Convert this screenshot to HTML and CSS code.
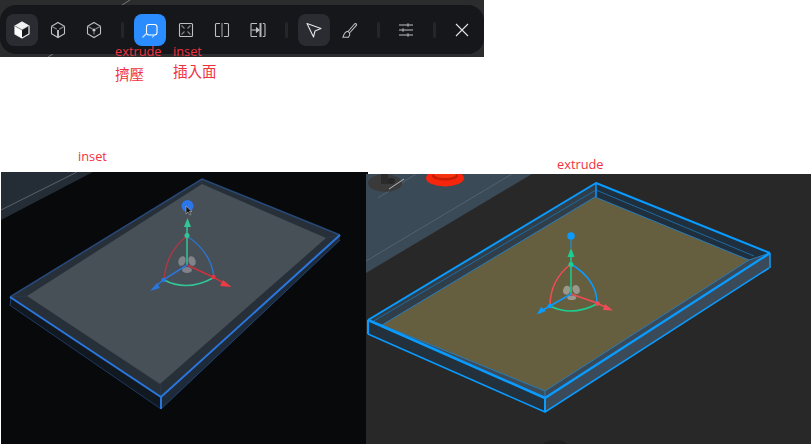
FILE: index.html
```html
<!DOCTYPE html>
<html lang="zh-Hant">
<head>
<meta charset="utf-8">
<title>extrude / inset</title>
<link rel="stylesheet" href="styles.css">
</head>
<body>
<div class="page">
  <header class="bar-shot">
    <svg class="bar-lines" viewBox="0 0 484 57" aria-hidden="true">
      <path d="M122 5 130 0M48 57 53 54" stroke="#77797c" stroke-width="1" fill="none"/>
    </svg>
    <nav class="toolbar">
      <button class="tool tool-on">
        <svg viewBox="0 0 20 20"><path d="M10 2 17 6V14L10 18 3 14V6Z" fill="#16181c" stroke="#eceded" stroke-width="1.2" stroke-linejoin="round"/><path d="M10 2 17 6 10 10 3 6Z" fill="#f2f2f2"/><path d="M3 6 10 10V18L3 14Z" fill="#fff"/><path d="M3 6 10 10 17 6" fill="none" stroke="#55575a" stroke-width=".6"/></svg>
      </button>
      <button class="tool">
        <svg viewBox="0 0 20 20" class="line"><path d="M10 2.500 16.500 6.200V13.800L10 17.500 3.500 13.800V6.200Z"/><path class="faint" d="M3.500 6.200 8.800 9.300M16.500 6.200 11.200 9.300"/><path class="thick" d="M10 10V17.500"/></svg>
      </button>
      <button class="tool">
        <svg viewBox="0 0 20 20" class="line"><path d="M10 2.500 16.500 6.200V13.800L10 17.500 3.500 13.800V6.200Z"/><path class="faint" d="M3.500 6.200 8.500 9.100M16.500 6.200 11.500 9.100M10 11.500V14.500"/><circle cx="10" cy="10" r="1.600" fill="#c9cacc" stroke="none"/></svg>
      </button>
      <span class="sep"></span>
      <button class="tool tool-active">
        <svg viewBox="0 0 20 20" class="line white"><rect x="6.500" y="4.500" width="10.500" height="10.500" rx="2.500"/><path d="M6.500 13.500 2.500 17.500M14 15 12.500 17.500" class="faint"/></svg>
      </button>
      <button class="tool">
        <svg viewBox="0 0 20 20" class="line"><rect x="3.500" y="3.500" width="13" height="13" rx="1"/><path class="faint" d="M5.500 5.500 8.500 8.500M14.500 5.500 11.500 8.500M5.500 14.500 8.500 11.500M14.500 14.500 11.500 11.500"/></svg>
      </button>
      <button class="tool">
        <svg viewBox="0 0 20 20" class="line"><path d="M8 3.500H4.500Q3.500 3.500 3.500 4.500V15.500Q3.500 16.500 4.500 16.500H8M12 3.500H15.500Q16.500 3.500 16.500 4.500V15.500Q16.500 16.500 15.500 16.500H12"/><path class="bar" d="M10 3V17"/></svg>
      </button>
      <button class="tool">
        <svg viewBox="0 0 20 20" class="line"><path d="M9 3.500H3.800Q3 3.500 3 4.300V15.700Q3 16.500 3.800 16.500H9M14.800 3.500H16Q17 3.500 17 4.500V15.500Q17 16.500 16 16.500H14.800"/><path d="M3.500 10H10"/><path d="M8.500 8 11 10 8.500 12Z" fill="#c9cacc"/><path class="thick" d="M12.500 3V17"/></svg>
      </button>
      <span class="sep"></span>
      <button class="tool tool-on">
        <svg viewBox="0 0 20 20" class="line light"><path d="M3 3.500 17 8.500 11 11 9.500 17Z" stroke-linejoin="round"/></svg>
      </button>
      <button class="tool">
        <svg viewBox="0 0 20 20" class="line"><path d="M3 17.200H8.500C10 15.500 10 14 9.500 12.800L8 11.300C5.500 11.500 4 13.500 3 17.200Z"/><path d="M8.500 11 14.500 4C15.500 3 17 4 16.500 5.200L10 12.500"/></svg>
      </button>
      <span class="sep"></span>
      <button class="tool">
        <svg viewBox="0 0 20 20" class="line"><path d="M3 5H17M3 10H17M3 15H17"/><path class="knob" d="M12 3.500V6.500M7 8.500V11.500M12 13.500V16.500"/></svg>
      </button>
      <span class="sep"></span>
      <button class="tool">
        <svg viewBox="0 0 20 20" class="line light"><path d="M4 4 16 16M16 4 4 16"/></svg>
      </button>
    </nav>
  </header>

  <span class="note note-a">extrude</span>
  <span class="note note-b">inset</span>
  <span class="note note-c zh">擠壓</span>
  <span class="note note-d zh">插入面</span>
  <span class="note note-e">inset</span>
  <span class="note note-f">extrude</span>

  <main class="views">
    <svg class="view view-inset" viewBox="1 172 367 272" role="img" aria-label="inset">
      <rect x="1" y="172" width="367" height="272" fill="#08090b"/>
      <path d="M1 172H93L1 220Z" fill="#242d35"/>
      <path d="M1 210 77 172" stroke="#59636b" stroke-width="1" fill="none"/>
      <path d="M10 297 161 397V409L11 306Z" fill="#111820"/>
      <path d="M161 397 340 235V240L161 409Z" fill="#1e2a37"/>
      <path d="M202 179 340 235 161 397 10 297Z" fill="#273039"/>
      <path d="M202 184 326 238 160 384 27 296Z" fill="#474f57"/>
      <path d="M202 179V184M340 235 326 238M161 397 160 384M10 297 27 296" stroke="#27384c" fill="none"/>
      <path d="M10 297 202 179 340 235" stroke="#27497a" stroke-width="1.500" fill="none"/>
      <path d="M11 306 161 409" stroke="#1c3a66" stroke-width="1" fill="none"/>
      <path d="M161 409 340 240" stroke="#1f4478" stroke-width="1" fill="none"/>
      <path d="M11 298 10 306" stroke="#1f4478" fill="none"/>
      <path d="M10 297 161 397 340 235" stroke="#2a76dc" stroke-width="2" fill="none"/>
      <path d="M161 397V409" stroke="#2a76dc" stroke-width="2" fill="none"/>

      <g fill="none" stroke-width="1.500">
        <path d="M187 236Q166 252 164 280" stroke="#a83a45"/>
        <path d="M187 236Q211 252 214 277" stroke="#2f72c8"/>
        <path d="M164 280Q187 292 213 278" stroke="#33c596"/>
      </g>
      <ellipse cx="182" cy="261" rx="3.500" ry="5" fill="#80838a" transform="rotate(20 182 261)"/>
      <ellipse cx="192" cy="261" rx="3.500" ry="5" fill="#80838a" transform="rotate(-20 192 261)"/>
      <ellipse cx="187" cy="270" rx="5" ry="3" fill="#80838a"/>
      <path d="M187 265V227" stroke="#33c596" stroke-width="1.500"/>
      <path d="M187 265 163 280 155 287" stroke="#2a76dc" stroke-width="1.500" fill="none"/>
      <path d="M187 265 213 277 222 282" stroke="#c7343f" stroke-width="1.500" fill="none"/>
      <path d="M187.500 218 191 227H184Z" fill="#33c596"/>
      <path d="M150 291 157 283 160 288Z" fill="#2a76dc"/>
      <path d="M231.500 287 220 286 223 280Z" fill="#f03a44"/>
      <circle cx="187" cy="235.500" r="2.500" fill="#33c596"/>
      <circle cx="163.500" cy="280" r="2.200" fill="#2a76dc"/>
      <circle cx="213.500" cy="277" r="2.200" fill="#e0343f"/>
      <circle cx="187.500" cy="206" r="6" fill="#2a76ec"/>
      <path d="M186 206V214L188 212 190 215 191 214.500 189.500 211.500H192Z" fill="#15181c" stroke="#c9cacc" stroke-width=".5"/>
    </svg>

    <svg class="view view-extrude" viewBox="366 174 445 270" role="img" aria-label="extrude">
      <rect x="366" y="174" width="445" height="270" fill="#282828"/>
      <path d="M366 174H532L366 273Z" fill="#3b4a57"/>
      <path d="M366 261 512 174M378 198 416 174" stroke="#55626d" stroke-width="1" fill="none"/>
      <ellipse cx="385" cy="183" rx="17" ry="9" fill="#3a3a3a"/>
      <ellipse cx="391" cy="181" rx="4" ry="3" fill="#262626"/>
      <path d="M381 174H388V184H381Z" fill="#2b2b2b"/>
      <path d="M389 189 404 179" stroke="#b5b9bc" stroke-width="1"/>
      <ellipse cx="445" cy="178" rx="19" ry="8.500" fill="#f5260c"/>
      <ellipse cx="445" cy="176" rx="13" ry="4.500" fill="#c91d05"/>
      <ellipse cx="445" cy="174.500" rx="11" ry="3.500" fill="#f5330f"/>
      <ellipse cx="555" cy="447" rx="13" ry="7" fill="#1f1f1f"/>

      <path d="M368 320 545 398V412L368 334Z" fill="#23313c"/>
      <path d="M545 398 770 253V268L545 412Z" fill="#3a4a58"/>
      <path d="M596 183 770 253 749 260 595 197Z" fill="#1f2f3d"/>
      <path d="M368 320 596 183 595 197 382 325Z" fill="#303e4a"/>
      <path d="M368 320 382 325 545 391 545 398Z" fill="#3c4c59"/>
      <path d="M545 391 749 260 770 253 545 398Z" fill="#394957"/>
      <path d="M595 197 749 260 545 391 382 325Z" fill="#655f40"/>
      <path d="M382 325 595 197 749 260M382 325 545 391 749 260M545 391V398M368 320 382 325M749 260 770 253" stroke="#2a7cb8" stroke-width="1" fill="none"/>
      <path d="M372 322 596 190 754 256" stroke="#1f6a9e" stroke-width="1" fill="none"/>
      <g fill="none" stroke="#0a9bff" stroke-linejoin="round">
        <path d="M368 320 596 183 770 253" stroke-width="2"/>
        <path d="M368 320 545 398 770 253" stroke-width="2.500"/>
        <path d="M368 334 545 412 769 268" stroke-width="1.500"/>
        <path d="M368 320V334M545 398V412" stroke-width="2"/>
        <path d="M770 253V268M596 183V197" stroke-width="1.500"/>
      </g>

      <g fill="none" stroke-width="1.500">
        <path d="M571 264Q550 280 550 306" stroke="#f04c57"/>
        <path d="M571 264Q597 280 597 303" stroke="#0a9bff"/>
        <path d="M550 306Q572 317 597 304" stroke="#19cf92"/>
      </g>
      <ellipse cx="566.700" cy="290" rx="3.500" ry="4.500" fill="#9a978d" transform="rotate(15 566 290)"/>
      <ellipse cx="576" cy="289.500" rx="3.500" ry="4.500" fill="#9a978d" transform="rotate(-20 576 289)"/>
      <ellipse cx="571.700" cy="297.700" rx="4.500" ry="2.300" fill="#9a978d"/>
      <path d="M571 294V256" stroke="#19cf92" stroke-width="1.500"/>
      <path d="M571 240V248" stroke="#0a9bff" stroke-width="1"/>
      <path d="M571 294 550 306 541 311" stroke="#0a9bff" stroke-width="1.500" fill="none"/>
      <path d="M571 294 597 303 605 307" stroke="#f04c57" stroke-width="1.500" fill="none"/>
      <path d="M571 248 574.500 257H567.500Z" fill="#19cf92"/>
      <path d="M537 314.500 541 307 546 311Z" fill="#0a9bff"/>
      <path d="M613 310.500 603 310 605 304Z" fill="#f04c57"/>
      <circle cx="571" cy="264.500" r="2.500" fill="#19cf92"/>
      <circle cx="550" cy="306" r="2.300" fill="#0a9bff"/>
      <circle cx="597.500" cy="303.500" r="2.300" fill="#f04c57"/>
      <circle cx="571" cy="236" r="3.700" fill="#0a9bff"/>
    </svg>
  </main>
</div>
</body>
</html>
```

FILE: styles.css
```css
* { box-sizing: border-box; }
html, body { margin: 0; background: #fff; }
.page {
  position: relative;
  width: 811px;
  height: 444px;
  overflow: hidden;
  font-family: "Open Sans", "Noto Sans CJK TC", sans-serif;
}
.bar-shot {
  position: relative;
  width: 484px;
  height: 57px;
  padding-top: 5px;
  background: #2b2c2d;
}
.bar-lines {
  position: absolute;
  left: 0;
  top: 0;
  width: 484px;
  height: 57px;
}
.toolbar {
  position: relative;
  display: flex;
  align-items: center;
  gap: 4px;
  height: 49px;
  padding: 0 6px;
  background: #15171b;
  border-radius: 16px;
}
.tool {
  display: flex;
  align-items: center;
  justify-content: center;
  width: 32px;
  height: 32px;
  padding: 0;
  border: 0;
  border-radius: 8px;
  background: transparent;
}
.tool svg { width: 20px; height: 20px; display: block; }
.tool-on { background: #2a2c31; }
.tool-active { background: #2b8cff; }
.sep {
  width: 3px;
  height: 16px;
  margin: 0 6.5px;
  border-radius: 2px;
  background: #23262b;
}
.line {
  fill: none;
  stroke: #bfc0c2;
  stroke-width: 1.1;
}
.line.white { stroke: #fff; }
.line.light { stroke: #e4e5e6; }
.line .thick { stroke-width: 2; stroke: #b5b6b8; }
.line .faint { stroke: #85888b; }
.line .bar { stroke: #5d6064; stroke-width: 2; }
.line .knob { stroke: #8f9295; stroke-width: 2; }
.line.white .faint { stroke: #cfe4ff; }

.note {
  position: absolute;
  color: #f0323f;
  font-size: 12.8px;
  line-height: 16px;
  white-space: nowrap;
}
.note.zh { font-size: 14.5px; line-height: 20px; }
.note-a { left: 115px; top: 43px; }
.note-b { left: 173px; top: 43px; }
.note-c { left: 115px; top: 65px; }
.note-d { left: 173px; top: 62px; }
.note-e { left: 78px; top: 148px; }
.note-f { left: 557px; top: 156px; }

.views {
  position: absolute;
  left: 1px;
  right: 0;
  bottom: 0;
  display: flex;
  align-items: flex-end;
}
.view { display: block; flex: none; }
.view-inset { width: 367px; height: 272px; margin-right: -2px; }
.view-extrude { position: relative; width: 445px; height: 270px; }
```
